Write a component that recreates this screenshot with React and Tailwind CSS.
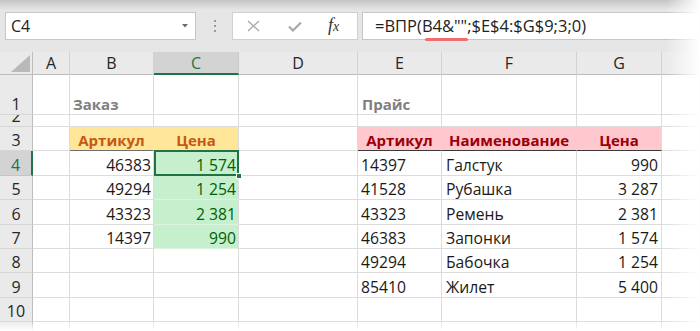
import React from "react";

const GRID = "grid grid-cols-[33px_37px_84px_85px_119px_84px_135px_85px_1fr]";
const base =
  "flex items-end pb-[1px] border-r border-b border-[#dcdcdc] whitespace-nowrap text-[15.7px] leading-[18px] text-[#1a1a1a]";

function C({ children, className = "" }) {
  return <div className={`${base} ${className}`}>{children}</div>;
}

function RH({ n, sel }) {
  return (
    <div
      className={
        sel
          ? "flex items-end justify-center pb-[1px] bg-[#d3d3d3] border-b border-b-[#c4c4c4] border-r-2 border-r-[#217346] text-[#217346] text-[16px] leading-[18px] overflow-hidden"
          : "flex items-end justify-center pb-[1px] bg-[#eaeaea] border-b border-b-[#d6d6d6] border-r border-r-[#bdbdbd] text-[#262626] text-[16px] leading-[18px] overflow-hidden"
      }
    >
      {n}
    </div>
  );
}

function CH({ l, sel }) {
  return (
    <div
      className={
        sel
          ? "flex items-end justify-center pb-[1px] bg-[#d3d3d3] border-r border-r-[#c8c8c8] border-b-2 border-b-[#217346] text-[#217346] text-[16px] leading-[18px]"
          : "flex items-end justify-center pb-[2px] bg-[#eaeaea] border-r border-r-[#d2d2d2] border-b border-b-[#bdbdbd] text-[#262626] text-[16px] leading-[18px]"
      }
    >
      {l}
    </div>
  );
}

const order = [
  ["46383", "1 574"],
  ["49294", "1 254"],
  ["43323", "2 381"],
  ["14397", "990"],
];

const price = [
  ["14397", "Галстук", "990"],
  ["41528", "Рубашка", "3 287"],
  ["43323", "Ремень", "2 381"],
  ["46383", "Запонки", "1 574"],
  ["49294", "Бабочка", "1 254"],
  ["85410", "Жилет", "5 400"],
];

const dataHeights = ["h-[25px]", "h-[24px]", "h-[25px]", "h-[24px]", "h-[24px]", "h-[25px]"];

export default function App() {
  return (
    <div className="relative w-[700px] h-[331px] overflow-hidden bg-white font-['Open_Sans','Noto_Sans',sans-serif]">
      {/* Formula bar */}
      <div className="h-[52px] bg-[#e6e6e6] flex items-start pt-[12px]">
        <div className="ml-[5px] w-[191px] h-[28px] bg-white border border-[#c6c6c6] flex items-center justify-between pl-[5px] pr-[7px] text-[16px] text-[#222]">
          <span>C4</span>
          <svg width="6" height="4" viewBox="0 0 6 4">
            <polygon points="0,0 6,0 3,3.5" fill="#6a6a6a" />
          </svg>
        </div>
        <div className="w-[36px] h-[28px] flex flex-col items-center justify-center gap-[3px] pl-[1px]">
          <div className="w-[2px] h-[2px] bg-[#9a9a9a]" />
          <div className="w-[2px] h-[2px] bg-[#9a9a9a]" />
          <div className="w-[2px] h-[2px] bg-[#9a9a9a]" />
        </div>
        <div className="w-[126px] h-[28px] bg-white border border-[#d0d0d0] flex items-center pl-[14px]">
          <svg width="13" height="12" viewBox="0 0 13 12">
            <path d="M1 1 L12 11 M12 1 L1 11" stroke="#a8a8a8" strokeWidth="1.3" fill="none" />
          </svg>
          <svg className="ml-[28px]" width="14" height="11" viewBox="0 0 14 11">
            <path d="M1 5.5 L5 9.5 L13 1.5" stroke="#a8a8a8" strokeWidth="2.2" fill="none" />
          </svg>
          <span className="ml-[26px] font-['Liberation_Serif',serif] italic text-[18px] leading-[18px] text-[#333]">
            f<span className="text-[14px]">x</span>
          </span>
        </div>
        <div className="ml-[4px] flex-1 h-[28px] bg-white border border-[#c6c6c6] flex items-center pl-[12px] text-[16.5px] leading-[18px] text-[#222]">
          <span>=ВПР(</span>
          <span className="relative">
            B4&amp;""
            <span className="absolute left-[3px] right-[-1px] bottom-[-6px] h-[3px] rounded-full bg-[#ef6d6d]" />
          </span>
          <span>;$E$4:$G$9;3;0)</span>
        </div>
      </div>

      {/* Column headers */}
      <div className={`${GRID} h-[23px]`}>
        <div className="relative bg-[#eaeaea] border-r border-r-[#bdbdbd] border-b border-b-[#bdbdbd]">
          <svg className="absolute right-[2px] bottom-[2px]" width="19" height="17" viewBox="0 0 19 17">
            <polygon points="19,0 19,17 0,17" fill="#b9b9b9" />
          </svg>
        </div>
        <CH l="A" />
        <CH l="B" />
        <CH l="C" sel />
        <CH l="D" />
        <CH l="E" />
        <CH l="F" />
        <CH l="G" />
        <CH l="" />
      </div>

      {/* Row 1 */}
      <div className={`${GRID} h-[40px]`}>
        <RH n="1" />
        <C />
        <C className="pl-[3px] font-bold text-[15px] text-[#7f7f7f]">Заказ</C>
        <C />
        <C />
        <C className="pl-[4px] font-bold text-[15px] text-[#7f7f7f]">Прайс</C>
        <C />
        <C />
        <C />
      </div>

      {/* Row 2 */}
      <div className={`${GRID} h-[12px]`}>
        <RH n="2" />
        <C />
        <C />
        <C />
        <C />
        <C />
        <C />
        <C />
        <C />
      </div>

      {/* Row 3 */}
      <div className={`${GRID} h-[24px]`}>
        <RH n="3" />
        <C />
        <C className="justify-center bg-[#ffe699] border-r-[#ffe699] border-b-[#6e6e6e] font-bold text-[15px] text-[#c65911]">Артикул</C>
        <C className="justify-center bg-[#ffe699] border-b-[#6e6e6e] font-bold text-[15px] text-[#c65911]">Цена</C>
        <C />
        <C className="justify-center bg-[#ffc7ce] border-r-[#ffc7ce] border-b-[#3a3a3a] font-bold text-[15px] text-[#9c0006]">Артикул</C>
        <C className="justify-center bg-[#ffc7ce] border-r-[#ffc7ce] border-b-[#3a3a3a] font-bold text-[15px] text-[#9c0006]">Наименование</C>
        <C className="justify-center bg-[#ffc7ce] border-b-[#3a3a3a] font-bold text-[15px] text-[#9c0006]">Цена</C>
        <C />
      </div>

      {/* Rows 4-9 */}
      {price.map((p, i) => {
        const o = order[i];
        return (
          <div key={i} className={`${GRID} ${dataHeights[i]}`}>
            <RH n={String(i + 4)} sel={i === 0} />
            <C />
            <C className="justify-end pr-[2px]">{o ? o[0] : ""}</C>
            {o ? (
              <div className="relative flex items-end justify-end pb-[1px] pr-[2px] bg-[#c6efce] border-r border-r-[#dcdcdc] border-b border-b-[#daf2df] text-[15.7px] leading-[18px] text-[#006100] whitespace-nowrap">
                {o[1]}
                {i === 0 && (
                  <>
                    <span className="absolute top-[-1px] left-0 right-[-1px] bottom-[-1px] border-2 border-[#217346] z-10" />
                    <span className="absolute right-[-4px] bottom-[-4px] w-[6px] h-[6px] bg-[#217346] border border-white z-20" />
                  </>
                )}
              </div>
            ) : (
              <C />
            )}
            <C />
            <C className="pl-[3px]">{p[0]}</C>
            <C className="pl-[4px]">{p[1]}</C>
            <C className="justify-end pr-[3px]">{p[2]}</C>
            <C />
          </div>
        );
      })}

      {/* Row 10 */}
      <div className={`${GRID} h-[24px]`}>
        <RH n="10" />
        <C />
        <C />
        <C />
        <C />
        <C />
        <C />
        <C />
        <C />
      </div>

      {/* Row 11 */}
      <div className={`${GRID} h-[24px]`}>
        <RH n="" />
        <C />
        <C />
        <C />
        <C />
        <C />
        <C />
        <C />
        <C />
      </div>

      {/* Edge fades */}
      <div className="absolute top-0 left-0 right-0 h-[10px] bg-gradient-to-b from-[#c4c4c4] to-transparent pointer-events-none" />
      <div className="absolute top-0 right-0 bottom-0 w-[34px] bg-gradient-to-r from-transparent to-white pointer-events-none" />
      <div className="absolute left-0 right-0 bottom-0 h-[10px] bg-gradient-to-b from-transparent to-white pointer-events-none" />
    </div>
  );
}
